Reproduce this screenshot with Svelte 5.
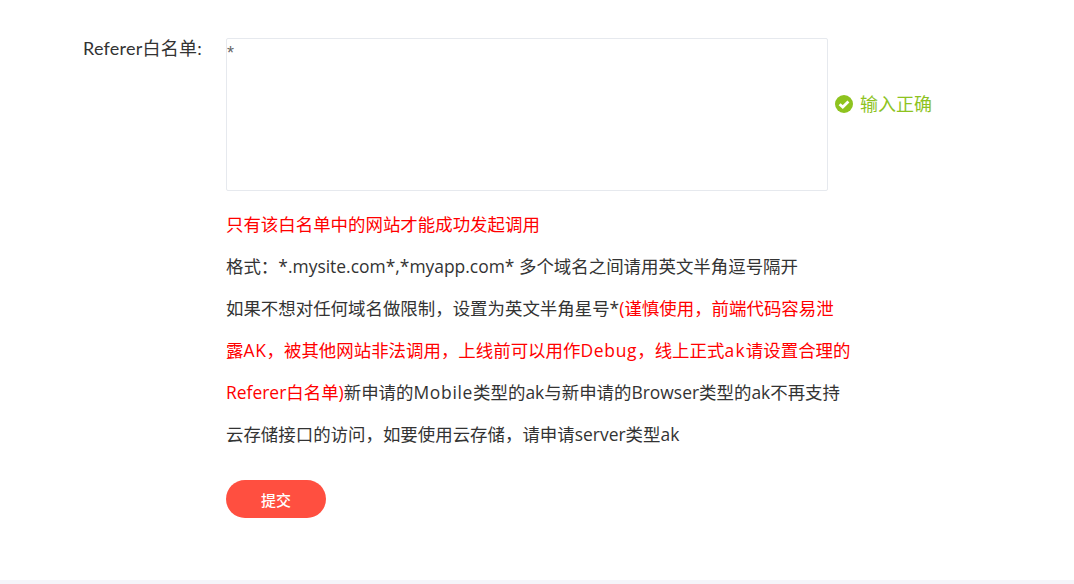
<script>
  const value = '*';
</script>

<div class="page">
  <form class="form" onsubmit={(e) => e.preventDefault()}>
    <div class="row">
      <label class="label" for="referer">Referer白名单:</label>
      <div class="field">
        <div class="input-line">
          <textarea id="referer" class="area" {value}></textarea>
          <span class="status">
            <svg class="tick" viewBox="0 0 18 18" width="18" height="18" aria-hidden="true">
              <circle cx="9" cy="9" r="9" fill="#8ec31f" />
              <path d="M4.6 9.2 L7.8 12.1 L13.4 6.6" fill="none" stroke="#fff" stroke-width="2.8" />
            </svg>
            输入正确
          </span>
        </div>
        <div class="help">
          <p class="red">只有该白名单中的网站才能成功发起调用</p>
          <p>格式：*.mysite.com*,*myapp.com* 多个域名之间请用英文半角逗号隔开</p>
          <p>如果不想对任何域名做限制，设置为英文半角星号*<span class="red">(谨慎使用，前端代码容易泄露<span class="wide">AK</span>，被其他网站非法调用，上线前可以用作<span class="wide">Debug</span>，线上正式<span class="wider">ak</span>请设置合理的Referer白名单)</span>新申请的<span class="wide">Mobile</span>类型的ak与新申请的Browser类型的ak不再支持云存储接口的访问，如要使用云存储，请申请server类型ak</p>
        </div>
        <button class="submit" type="submit">提交</button>
      </div>
    </div>
  </form>
  <div class="foot"></div>
</div>

<style>
  :global(body) {
    margin: 0;
    background: #fff;
  }
  .page {
    height: 584px;
    display: flex;
    flex-direction: column;
    justify-content: space-between;
    font-family: "Open Sans", "Noto Sans CJK SC", sans-serif;
    color: #333;
    overflow: hidden;
  }
  .form {
    padding: 38px 0 0 83px;
  }
  .row {
    display: flex;
  }
  .label {
    width: 143px;
    flex: none;
    font-family: Lato, "Noto Sans CJK SC", sans-serif;
    font-size: 18px;
    letter-spacing: 0.25px;
    line-height: 20px;
    color: #333;
  }
  .field {
    width: 625px;
    display: flex;
    flex-direction: column;
    align-items: flex-start;
  }
  .input-line {
    display: flex;
    align-items: flex-start;
  }
  .area {
    width: 602px;
    height: 153px;
    flex: none;
    box-sizing: border-box;
    border: 1px solid #e6e9ee;
    border-radius: 2px;
    padding: 4px 0 0 0;
    margin: 0;
    resize: none;
    outline: none;
    font-family: "Liberation Sans", sans-serif;
    font-size: 18px;
    line-height: 20px;
    color: #666;
  }
  .status {
    display: flex;
    align-items: center;
    gap: 7px;
    margin: 54px 0 0 7px;
    font-size: 18px;
    line-height: 24px;
    color: #8ec31f;
    white-space: nowrap;
  }
  .tick {
    flex: none;
  }
  .help {
    margin-top: 12px;
    font-size: 17.45px;
    line-height: 42px;
  }
  .help p {
    margin: 0;
  }
  .red {
    color: #f00;
  }
  .wide {
    letter-spacing: 0.7px;
  }
  .wider {
    letter-spacing: 1.3px;
  }
  .submit {
    margin-top: 25px;
    width: 100px;
    height: 38px;
    border: 0;
    border-radius: 19px;
    background: #ff4f40;
    color: #fff;
    font-family: inherit;
    font-size: 15px;
    font-weight: 500;
    padding: 0;
  }
  .foot {
    height: 4px;
    background: #f5f5fa;
  }
</style>
